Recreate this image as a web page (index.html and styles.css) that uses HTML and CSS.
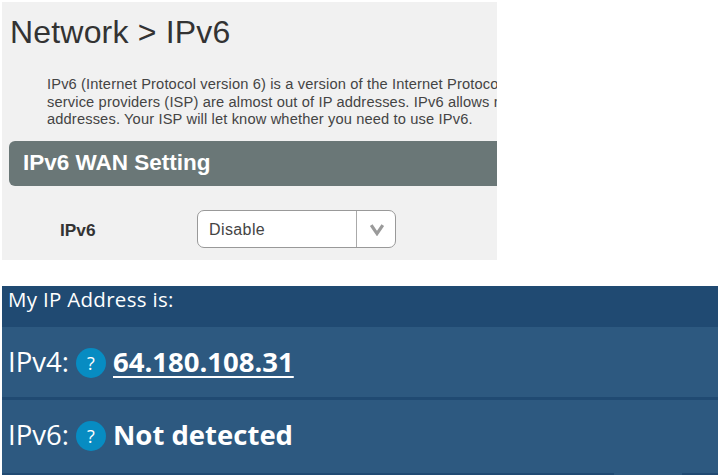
FILE: index.html
```html
<!DOCTYPE html>
<html lang="en">
<head>
  <meta charset="UTF-8" />
  <meta name="viewport" content="width=device-width, initial-scale=1" />
  <title>Network &gt; IPv6</title>
  <link rel="stylesheet" href="styles.css">
</head>
<body>
  <section class="router">
    <h1 class="router-title">Network &gt; IPv6</h1>
    <p class="router-text">
      IPv6 (Internet Protocol version 6) is a version of the Internet Protocol<br>
      service providers (ISP) are almost out of IP addresses. IPv6 allows m<br>
      addresses. Your ISP will let know whether you need to use IPv6.
    </p>
    <h2 class="setting-header">IPv6 WAN Setting</h2>
    <div class="setting-row">
      <span class="setting-label">IPv6</span>
      <div class="select">
        <span class="select-value">Disable</span>
        <span class="select-arrow">
          <svg width="16" height="12" viewBox="0 0 16 12">
            <path d="M2.2 1.2L8 9.6L13.8 1.2" fill="none" stroke="#9a9a9a" stroke-width="3.2" />
          </svg>
        </span>
      </div>
    </div>
  </section>

  <section class="address">
    <div class="address-header">My IP Address is:</div>
    <div class="address-row">
      <span class="address-label">IPv4:</span>
      <span class="help">?</span>
      <a class="address-value linked">64.180.108.31</a>
    </div>
    <div class="address-row second">
      <span class="address-label">IPv6:</span>
      <span class="help">?</span>
      <span class="address-value">Not detected</span>
    </div>
    <div class="address-footer"><div class="address-tab"></div></div>
  </section>
</body>
</html>
```
FILE: styles.css
```css
*, *::before, *::after { box-sizing: border-box; }

body {
  margin: 0;
  padding: 2px 1px 0 2px;
  height: 476px;
  background: #fff;
  overflow: hidden;
}

/* router settings */
.router {
  width: 495px;
  height: 258px;
  background: #f1f1f1;
  overflow: hidden;
  font-family: "Liberation Sans", Arial, sans-serif;
  color: #333;
}

.router-title {
  margin: 0;
  padding: 11px 0 0 8px;
  font-size: 32px;
  font-weight: 400;
  line-height: 38px;
  letter-spacing: 0.18px;
  white-space: nowrap;
}

.router-text {
  margin: 25px 0 0 45px;
  font-size: 14.67px;
  line-height: 17.6px;
  letter-spacing: 0.14px;
  white-space: nowrap;
  color: #444;
}

.setting-header {
  margin: 12px 0 0 7px;
  padding-left: 14px;
  height: 45px;
  border-radius: 6px 0 0 6px;
  background: #6a7777;
  color: #fff;
  font-size: 22.5px;
  line-height: 43px;
}

.setting-row {
  display: flex;
  align-items: center;
  margin-top: 24px;
  padding-left: 58px;
}

.setting-label {
  width: 137px;
  padding-top: 3px;
  font-size: 17.3px;
  font-weight: 700;
}

.select {
  display: flex;
  width: 199px;
  height: 38px;
  border: 1px solid #999;
  border-radius: 7px;
  background: #fff;
}

.select-value {
  flex: 1;
  padding-left: 11px;
  font-size: 16px;
  line-height: 37px;
  letter-spacing: 0.4px;
  color: #444;
}

.select-arrow {
  display: flex;
  align-items: center;
  justify-content: center;
  width: 39px;
  padding: 3px 0 0 1px;
  border-left: 1px solid #aaa;
}

/* detected addresses */
.address {
  display: flex;
  flex-direction: column;
  width: 716px;
  height: 189px;
  margin-top: 26px;
  background: #204a72;
  color: #fff;
  font-family: "Open Sans", sans-serif;
}

.address-header {
  height: 41px;
  padding-left: 6px;
  font-size: 20.5px;
  line-height: 27px;
  letter-spacing: 0.3px;
}

.address-row {
  display: flex;
  align-items: center;
  height: 70px;
  padding: 2px 0 0 6px;
  background: #2d5980;
  font-size: 27.5px;
  line-height: 36px;
}

.address-row.second {
  height: 73px;
  margin-top: 3px;
  padding: 0 0 2px 6px;
}

.address-label {
  width: 68px;
  padding-bottom: 2px;
}

.help {
  width: 30px;
  height: 30px;
  margin-right: 7px;
  border-radius: 50%;
  background: #078cc2;
  font-size: 18px;
  font-weight: 500;
  line-height: 30px;
  text-align: center;
}

.address-value {
  padding-bottom: 2px;
  font-weight: 700;
}

.linked {
  text-decoration: underline;
  text-decoration-thickness: 2px;
  text-underline-offset: 4px;
}

.address-footer {
  display: flex;
  justify-content: flex-end;
  flex: 1;
  padding-right: 36px;
}

.address-tab {
  width: 68px;
  background: #2d5980;
}
```
